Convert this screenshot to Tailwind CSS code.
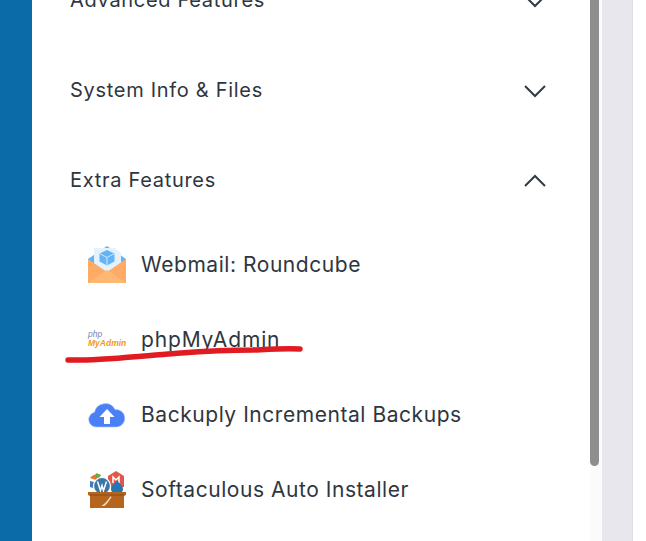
<!DOCTYPE html>
<html lang="en">
<head>
  <meta charset="UTF-8" />
  <title>Extra Features</title>
  <script src="https://cdn.jsdelivr.net/npm/@tailwindcss/browser@4"></script>
</head>
<body class="bg-white overflow-hidden">
  <div class="relative flex h-[541px] w-[646px] overflow-hidden font-['Inter',sans-serif] text-[#2f3640]">
    <!-- sidebar strip -->
    <div class="w-8 shrink-0 bg-[#0a6ba8]"></div>

    <!-- menu -->
    <div class="w-[558px] shrink-0 pl-[38px] pr-[44px]">
      <div class="-mt-[45px]">
        <div class="flex h-[90px] items-center justify-between text-[20px] tracking-[0.7px]">
          <span>Advanced Features</span>
          <svg class="h-4 w-[22px]" viewBox="0 0 22 16" fill="none" stroke="#333a44" stroke-width="2"><path d="M1 4l10 10L21 4"/></svg>
        </div>
        <div class="flex h-[90px] items-center justify-between text-[20px] tracking-[0.7px]">
          <span>System Info &amp; Files</span>
          <svg class="h-4 w-[22px]" viewBox="0 0 22 16" fill="none" stroke="#333a44" stroke-width="2"><path d="M1 4l10 10L21 4"/></svg>
        </div>
        <div class="flex h-[90px] items-center justify-between text-[20px] tracking-[0.7px]">
          <span>Extra Features</span>
          <svg class="h-4 w-[22px]" viewBox="0 0 22 16" fill="none" stroke="#333a44" stroke-width="2"><path d="M1 14L11 4l10 10"/></svg>
        </div>
      </div>

      <div class="mt-[2px] pl-[17px] text-[21px] tracking-[0.55px]">
        <div class="flex h-[75px] items-center gap-[14px]">
          <svg class="h-10 w-10 shrink-0" viewBox="0 0 40 40">
            <path d="M1 14L20 1l19 13v10H1z" fill="#62b5f5"/>
            <path d="M7 3h21l6 5v22H7z" fill="#e3f2fd"/>
            <path d="M20 5l7.500 3.500v8L20 20.500l-7.500-4v-8z" fill="#64b5f6"/>
            <path d="M20 12.500l7.500-4M20 12.500l-7.500-4M20 12.500v8" stroke="#cfe8fc" stroke-width="1" fill="none"/>
            <path d="M1 14l19 13 19-13v24H1z" fill="#ffab66"/>
            <path d="M1 38l19-13 19 13z" fill="#ffb873"/>
          </svg>
          <span>Webmail: Roundcube</span>
        </div>
        <div class="flex h-[75px] items-center gap-[14px]">
          <div class="flex h-10 w-10 shrink-0 flex-col justify-center pb-[2px] pl-px font-['Liberation_Sans',sans-serif] text-[8.500px] italic leading-[9px] tracking-normal">
            <span class="text-[#7a7fb0]">php</span>
            <span class="font-bold text-[#f29a17]">MyAdmin</span>
          </div>
          <span class="tracking-[0.85px]">phpMyAdmin</span>
        </div>
        <div class="flex h-[75px] items-center gap-[14px]">
          <svg class="h-10 w-10 shrink-0" viewBox="0 0 40 40">
            <path d="M9 32a7.500 7.500 0 0 1-1.500-14.800A11 11 0 0 1 28 14.500 8.800 8.800 0 0 1 30 32z" fill="#4a80f5" stroke="#a9c4fa" stroke-width=".6"/>
            <path d="M20 14l7.500 8H23v7h-6v-7h-4.500z" fill="#fff"/>
          </svg>
          <span>Backuply Incremental Backups</span>
        </div>
        <div class="flex h-[75px] items-center gap-[14px]">
          <svg class="h-10 w-10 shrink-0" viewBox="0 0 40 40">
            <path d="M3 8c2-3 8-5 11-3l-4 3c1 2 2 5 0 7l-3-1 2-4z" fill="#e8762e"/>
            <path d="M9 3l5 2-2 3-4-1z" fill="#6aa84f"/>
            <path d="M3 11l4 1-1 6-3-1z" fill="#3f7cc4"/>
            <path d="M29 1l8 5v11H21V6z" fill="#e2574c"/>
            <path d="M26 13V7l3 3 3-3v6" stroke="#fff" stroke-width="1.500" fill="none"/>
            <circle cx="15" cy="16" r="8.500" fill="#3a76a6" stroke="#fff" stroke-width="1.200"/>
            <path d="M10.500 11.500l3 9 1.500-5 1.500 5 3-9" stroke="#fff" stroke-width="1.500" fill="none"/>
            <path d="M30 10c1 3 6 5 6 9a6 6 0 0 1-12 0c0-4 5-6 6-9z" fill="#1f77b4"/>
            <path d="M1 22h38v3l-2 1v12H3V26l-2-1z" fill="#b5651d"/>
            <path d="M3 25h34" stroke="#8a4c14" stroke-width="1"/>
            <path d="M14 36c3-1 7-6 9-9 1-1 2 0 1 1-2 2-4 7-7 8z" fill="#f0dcc0"/>
          </svg>
          <span>Softaculous Auto Installer</span>
        </div>
      </div>
    </div>

    <!-- scrollbar -->
    <div class="flex w-3 shrink-0 bg-[#fbfbfc]">
      <div class="h-[466px] w-[9px] rounded-b-[5px] bg-[#8e8e8e]"></div>
    </div>

    <!-- page behind the menu -->
    <div class="h-full w-[31px] shrink-0 border-r border-[#dfdee4] bg-[#e8e7ee]"></div>

    <!-- red marker stroke -->
    <svg class="absolute left-0 top-0 h-[541px] w-[646px]" viewBox="0 0 646 541" fill="none">
      <path d="M68 360c25 1 60-3 100-6 40-3 50-4 85-4 20-1 35-2 47-1" stroke="#e01b22" stroke-width="5.500" stroke-linecap="round" stroke-linejoin="round"/>
    </svg>
  </div>
</body>
</html>
